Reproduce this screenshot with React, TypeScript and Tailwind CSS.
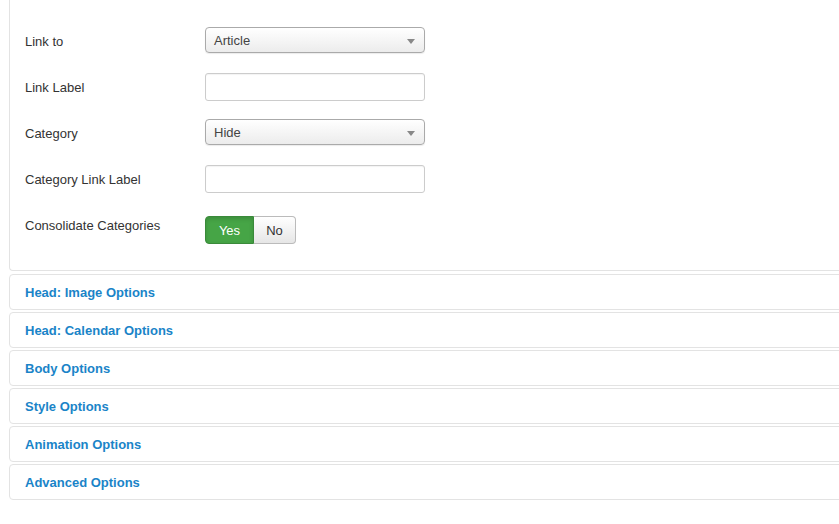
import React from "react";

const font = { fontFamily: '"Liberation Sans", Arial, sans-serif' };

function Select({ value }: { value: string }) {
    return (
        <div className="relative w-[220px] h-[26px] rounded-[4px] border border-[#aaaaaa] bg-gradient-to-b from-white to-[#ececec] shadow-[0_1px_1px_rgba(0,0,0,0.08)] flex items-center pl-[8px] pt-[1px] text-[13px] text-[#444]">
            {value}
            <span className="absolute right-[9px] top-[11px] w-0 h-0 border-l-[4px] border-r-[4px] border-t-[5px] border-l-transparent border-r-transparent border-t-[#888]" />
        </div>
    );
}

function TextInput() {
    return <div className="w-[220px] h-[28px] rounded-[3px] border border-[#cccccc] bg-white shadow-[inset_0_1px_1px_rgba(0,0,0,0.05)]" />;
}

function Row({ label, children, className = "" }: { label: string; children: React.ReactNode; className?: string }) {
    return (
        <div className={"flex flex-row h-[46px] " + className}>
            <div className="w-[180px] pt-[6px] leading-[18px] text-[13px] text-[#333]">{label}</div>
            <div>{children}</div>
        </div>
    );
}

const sections = [
    "Head: Image Options",
    "Head: Calendar Options",
    "Body Options",
    "Style Options",
    "Animation Options",
    "Advanced Options",
];

export default function App() {
    return (
        <div className="w-[839px] h-[524px] overflow-hidden bg-white pl-[9px]" style={font}>
            <div className="mr-[-20px] border-l border-b border-[#e3e3e3] rounded-bl-[4px] pl-[15px] pt-[27px] pb-[26px]">
                <Row label="Link to"><Select value="Article" /></Row>
                <Row label="Link Label"><TextInput /></Row>
                <Row label="Category"><Select value="Hide" /></Row>
                <Row label="Category Link Label"><TextInput /></Row>
                <div className="flex flex-row mt-[5px] h-[28px]">
                    <div className="w-[180px] pt-[1px] leading-[18px] text-[13px] text-[#333]">Consolidate Categories</div>
                    <div className="flex flex-row">
                        <button className="w-[49px] h-[28px] pt-[1px] rounded-l-[4px] bg-[#46a546] border border-[#3a8a3a] text-white text-[13px] shadow-[inset_0_2px_4px_rgba(0,0,0,0.15)]">Yes</button>
                        <button className="w-[42px] h-[28px] pt-[1px] rounded-r-[4px] bg-gradient-to-b from-white to-[#e6e6e6] border border-l-0 border-[#bbbbbb] text-[#333] text-[13px]">No</button>
                    </div>
                </div>
            </div>
            <div className="mt-[3px] flex flex-col gap-[2px] mr-[-20px]">
                {sections.map((s) => (
                    <div key={s} className="h-[36px] border border-[#e3e3e3] rounded-[4px] pl-[15px] pt-[1px] flex items-center">
                        <span className="text-[13px] font-bold text-[#1a84c8]">{s}</span>
                    </div>
                ))}
            </div>
        </div>
    );
}
